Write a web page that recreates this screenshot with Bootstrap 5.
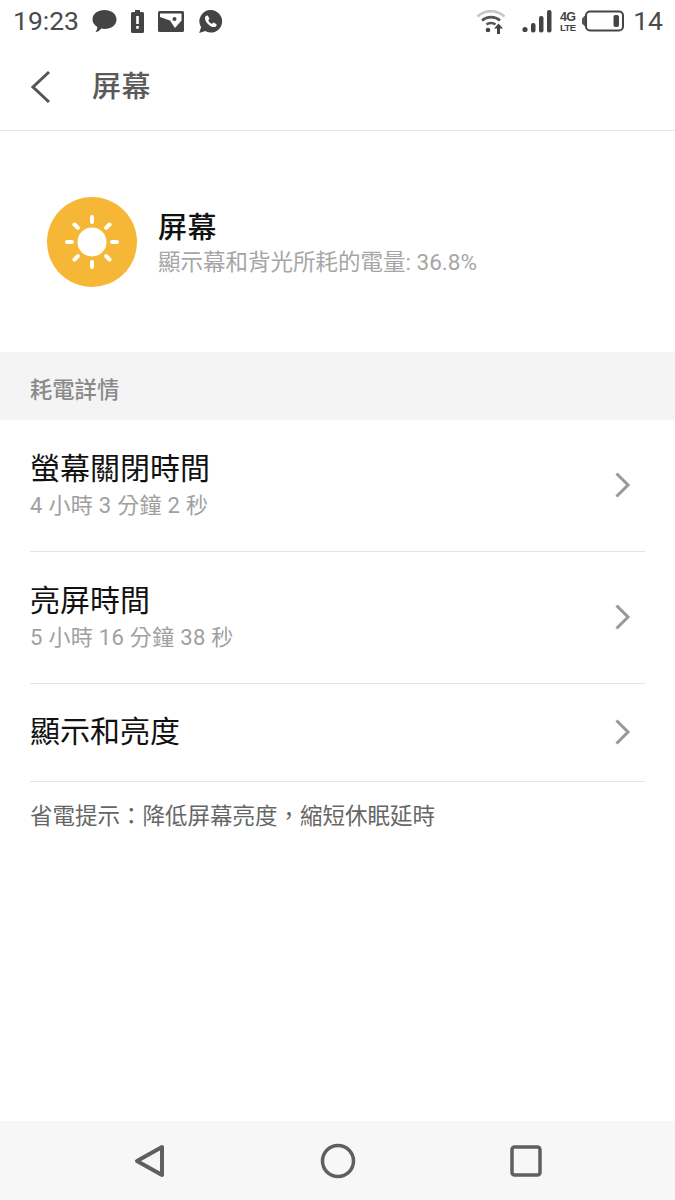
<!DOCTYPE html>
<html lang="zh-Hant">
<head>
<meta charset="utf-8">
<title>屏幕</title>
<link href="https://cdn.jsdelivr.net/npm/bootstrap@5.3.0/dist/css/bootstrap.min.css" rel="stylesheet">
<style>
html,body{height:1200px;margin:0;overflow:hidden}
body{font-family:"Roboto","Noto Sans CJK TC","Noto Sans CJK SC",sans-serif;background:#fff;color:#000}
.screen{width:675px;height:1200px}
.sbar{height:44px;padding:0 12px 2px 13px;color:#444}
.sbar .clock,.sbar .lvl{font-size:26.500px;line-height:1;color:#4a4a4a}
.sbar svg{display:block}
.lefticons{gap:14px;margin-left:13px}
.righticons{gap:0}
.gap4g{margin-right:1px}
.appbar{height:87px;border-bottom:1px solid #e6e6e6;padding-left:27px}
.apptitle{font-size:29px;font-weight:500;color:#5a5a5a;margin-left:38px;line-height:1;letter-spacing:.5px}
.summary{height:221px;padding:4px 0 0 47px;gap:21px}
.sumicon{width:90px;height:90px;margin-top:-4px}
.sumtitle{font-size:29px;font-weight:500;line-height:1;color:#111;margin-bottom:8px;letter-spacing:.5px}
.sumsub{font-size:22.500px;line-height:1;color:#a6a6a6;white-space:nowrap}
.sechead{height:68px;background:#f4f4f4;padding:8px 30px 0;font-size:22.300px;color:#8a8a8a;font-weight:500;line-height:1}
.rowlist{padding:0 30px}
.rowitem{border-bottom:1px solid #e4e4e4;padding-right:13px}
.rowtall{height:132px}
.rowshort{height:98px}
.rowtitle{font-size:30px;line-height:1;color:#111;margin-top:-1px}
.rowsub{font-size:22px;line-height:1;color:#a0a0a0;margin-top:11px;letter-spacing:.3px}
.chev{margin-top:-2px}
.tiptext{font-size:22.500px;line-height:1;color:#666;padding:23px 30px 0}
.navfoot{height:79px;background:#f7f7f7;padding:0}
.spacer{flex:1 1 auto}
.navslot{width:188px}
</style>
</head>
<body>
<div class="screen d-flex flex-column">
  <div class="sbar d-flex align-items-center">
    <span class="clock">19:23</span>
    <div class="lefticons d-flex align-items-center">
      <svg width="25" height="24" viewBox="0 0 25 24"><path fill="#444" d="M12.5 1C19 1 24.500 4.800 24.500 10.500S19 20 12.500 20c-1.200 0-2.300-.1-3.300-.4C8 21.500 5.800 23 3.500 23c1.200-1.500 1.900-3.300 1.900-5C2.500 16.300.5 13.700.5 10.500.5 4.800 6 1 12.500 1Z"/></svg>
      <svg width="13" height="23" viewBox="0 0 13 23"><path fill="#444" d="M4 0h5v2h2.500A1.500 1.500 0 0 1 13 3.500v18a1.500 1.500 0 0 1-1.500 1.500h-10A1.500 1.500 0 0 1 0 21.500v-18A1.500 1.500 0 0 1 1.500 2H4Z"/><path fill="#fff" d="M5.200 6h2.600v8H5.200zM5.200 16h2.600v2.800H5.200z"/></svg>
      <svg width="26" height="21" viewBox="0 0 26 21"><rect width="26" height="21" rx="1.500" fill="#444"/><path fill="#fff" d="M2 2.500h21.500v7L17 17 12 9.500 2 6Z"/><circle cx="16.500" cy="8" r="2" fill="#444"/></svg>
      <svg width="25" height="25" viewBox="0 0 25 25"><path fill="#444" d="M12.800 1a11.300 11.300 0 1 1-5.600 21.100L1.200 24l1.900-5.800A11.300 11.300 0 0 1 12.800 1Z"/><path fill="#fff" d="M9 6.500c-.8 0-2 .9-2 2.700 0 3.700 5 8.900 8.700 8.900 1.800 0 2.900-1.300 2.900-2.200 0-.4-.1-.8-.4-1l-2.300-1.200c-.5-.2-.9 0-1.200.4l-.7.900c-1.600-.5-3.300-2.300-3.800-3.700l.8-.8c.3-.3.500-.7.300-1.200L10 7c-.2-.4-.6-.5-1-.5Z"/></svg>
    </div>
    <div class="spacer"></div>
    <div class="righticons d-flex align-items-center">
      <svg width="30" height="26" viewBox="0 0 30 26" class="me-3"><path d="M1.500 8.500c7.500-7 19.500-7 27 0" fill="none" stroke="#c4c4c4" stroke-width="2.500"/><path d="M6 12.500c5-4.500 13-4.500 18 0" fill="none" stroke="#555" stroke-width="2.600"/><path d="M10.500 16.500c2.500-2 6.500-2 9 0" fill="none" stroke="#555" stroke-width="2.600"/><circle cx="12" cy="22" r="2.300" fill="#444"/><path fill="#444" d="M22.500 15.500 27 20.500h-3V26h-3v-5.500h-3Z"/></svg>
      <svg width="30" height="24" viewBox="0 0 30 24" class="me-2"><circle cx="3" cy="20.500" r="2.600" fill="#444"/><rect x="9" y="14" width="4.500" height="9.500" rx="2" fill="#444"/><rect x="17" y="7" width="4.500" height="16.500" rx="2" fill="#444"/><rect x="25" y="1" width="4.500" height="22.500" rx="2" fill="#444"/></svg>
      <svg width="20" height="24" viewBox="0 0 20 24" class="gap4g"><text x="0" y="11.500" font-family="Liberation Sans" font-size="12.500" font-weight="700" fill="#444" textLength="16">4G</text><text x="0" y="22" font-family="Liberation Sans" font-size="9.500" font-weight="700" fill="#444" textLength="16">LTE</text></svg>
      <svg width="44" height="24" viewBox="0 0 44 24"><path fill="#555" d="M1 9.500 4 6.500v11l-3-3Z"/><rect x="5" y="2.500" width="37" height="19" rx="4" fill="none" stroke="#444" stroke-width="2"/><rect x="32.500" y="6" width="5.500" height="12" rx="2" fill="#444"/></svg>
      <span class="lvl ms-2">14</span>
    </div>
  </div>

  <div class="appbar d-flex align-items-center">
    <svg width="27" height="36" viewBox="0 0 27 36"><path d="M22 3 6 18l16 15" fill="none" stroke="#555" stroke-width="3"/></svg>
    <span class="apptitle">屏幕</span>
  </div>

  <div class="summary d-flex align-items-center">
    <svg class="sumicon" viewBox="0 0 90 90"><circle cx="45" cy="45" r="45" fill="#f6b737"/><circle cx="45" cy="45" r="14.500" fill="#fff"/><g stroke="#fff" stroke-width="4" stroke-linecap="round"><path d="M45 20v5M45 65v5M20 45h5M65 45h5M27.500 27.500l3.400 3.400M59.100 59.100l3.400 3.400M27.500 62.500l3.400-3.400M59.100 30.900l3.400-3.400"/></g></svg>
    <div>
      <div class="sumtitle">屏幕</div>
      <div class="sumsub">顯示幕和背光所耗的電量: 36.8%</div>
    </div>
  </div>

  <div class="sechead d-flex align-items-center">耗電詳情</div>

  <div class="rowlist">
    <div class="rowitem rowtall d-flex align-items-center justify-content-between">
      <div><div class="rowtitle">螢幕關閉時間</div><div class="rowsub">4 小時 3 分鐘 2 秒</div></div>
      <svg class="chev" width="18" height="28" viewBox="0 0 18 28"><path d="M2.500 2.500 14 14 2.500 25.500" fill="none" stroke="#999" stroke-width="3"/></svg>
    </div>
    <div class="rowitem rowtall d-flex align-items-center justify-content-between">
      <div><div class="rowtitle">亮屏時間</div><div class="rowsub">5 小時 16 分鐘 38 秒</div></div>
      <svg class="chev" width="18" height="28" viewBox="0 0 18 28"><path d="M2.500 2.500 14 14 2.500 25.500" fill="none" stroke="#999" stroke-width="3"/></svg>
    </div>
    <div class="rowitem rowshort d-flex align-items-center justify-content-between">
      <div class="rowtitle">顯示和亮度</div>
      <svg class="chev" width="18" height="28" viewBox="0 0 18 28"><path d="M2.500 2.500 14 14 2.500 25.500" fill="none" stroke="#999" stroke-width="3"/></svg>
    </div>
  </div>
  <div class="tiptext">省電提示：降低屏幕亮度，縮短休眠延時</div>

  <div class="spacer"></div>

  <div class="navfoot d-flex align-items-center justify-content-center">
    <div class="navslot d-flex justify-content-center"><svg width="34" height="36" viewBox="0 0 34 36"><path d="M29 4 4 18l25 14Z" fill="none" stroke="#5f5f5f" stroke-width="4" stroke-linejoin="round"/></svg></div>
    <div class="navslot d-flex justify-content-center"><svg width="36" height="36" viewBox="0 0 36 36"><circle cx="18" cy="18" r="15.500" fill="none" stroke="#5f5f5f" stroke-width="3.500"/></svg></div>
    <div class="navslot d-flex justify-content-center"><svg width="32" height="32" viewBox="0 0 32 32"><rect x="2" y="2" width="28" height="28" rx="2.500" fill="none" stroke="#5f5f5f" stroke-width="3.500"/></svg></div>
  </div>
</div>
<script src="https://cdn.jsdelivr.net/npm/bootstrap@5.3.0/dist/js/bootstrap.bundle.min.js"></script>
</body>
</html>
